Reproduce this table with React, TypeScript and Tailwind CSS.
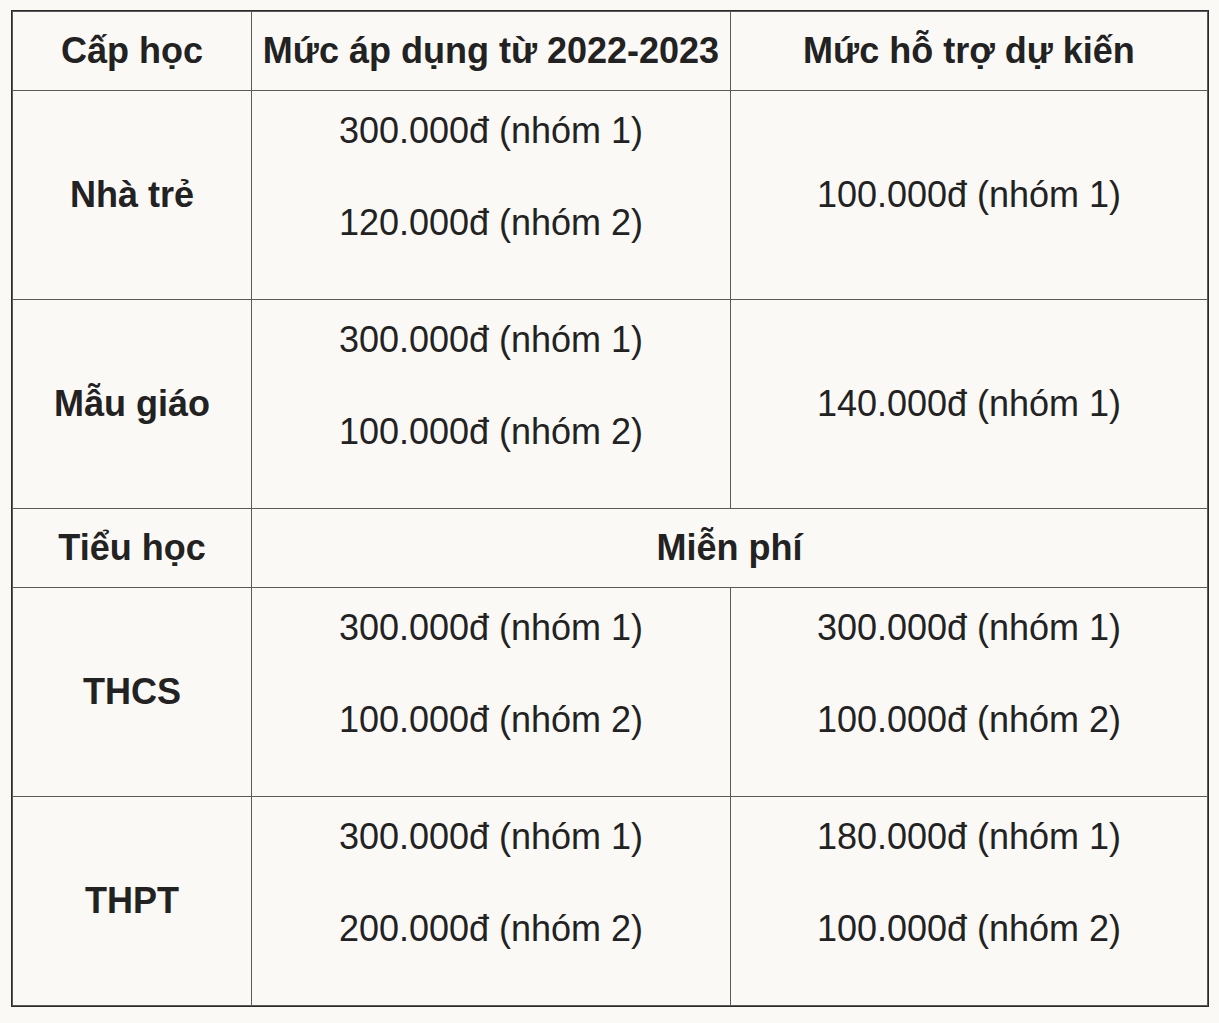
const rows: { level: string; current: string[]; support: string[] | null }[] = [
  { level: "Nhà trẻ", current: ["300.000đ (nhóm 1)", "120.000đ (nhóm 2)"], support: ["100.000đ (nhóm 1)"] },
  { level: "Mẫu giáo", current: ["300.000đ (nhóm 1)", "100.000đ (nhóm 2)"], support: ["140.000đ (nhóm 1)"] },
  { level: "Tiểu học", current: [], support: null },
  { level: "THCS", current: ["300.000đ (nhóm 1)", "100.000đ (nhóm 2)"], support: ["300.000đ (nhóm 1)", "100.000đ (nhóm 2)"] },
  { level: "THPT", current: ["300.000đ (nhóm 1)", "200.000đ (nhóm 2)"], support: ["180.000đ (nhóm 1)", "100.000đ (nhóm 2)"] },
];

const cell = "border border-[#5a5a5a] px-2 py-3 text-center align-middle whitespace-nowrap";

function Lines({ items }: { items: string[] }) {
  if (items.length === 1) {
    return <p className="leading-[56px]">{items[0]}</p>;
  }
  return (
    <div className="flex flex-col gap-[36px] pb-[36px]">
      {items.map((t) => (
        <p key={t} className="leading-[56px]">
          {t}
        </p>
      ))}
    </div>
  );
}

export default function App() {
  return (
    <div className="min-h-screen bg-[#faf9f5] pl-[11px] pt-[10px] font-['Liberation_Sans',Arial,sans-serif] text-[36px] text-[#222]">
      <div className="w-[1198px] border border-[#2a2a2a]">
        <table className="w-full table-fixed border-collapse">
          <colgroup>
            <col className="w-[239px]" />
            <col className="w-[479px]" />
            <col />
          </colgroup>
          <thead>
            <tr>
              <th className={`${cell} font-bold leading-[54px]`}>Cấp học</th>
              <th className={`${cell} font-bold leading-[54px]`}>Mức áp dụng từ 2022-2023</th>
              <th className={`${cell} font-bold leading-[54px]`}>Mức hỗ trợ dự kiến</th>
            </tr>
          </thead>
          <tbody>
            {rows.map((r) => (
              <tr key={r.level}>
                <td className={`${cell} font-bold leading-[54px]`}>{r.level}</td>
                {r.support === null ? (
                  <td colSpan={2} className={`${cell} font-bold leading-[54px]`}>
                    Miễn phí
                  </td>
                ) : (
                  <>
                    <td className={cell}>
                      <Lines items={r.current} />
                    </td>
                    <td className={cell}>
                      <Lines items={r.support} />
                    </td>
                  </>
                )}
              </tr>
            ))}
          </tbody>
        </table>
      </div>
    </div>
  );
}
